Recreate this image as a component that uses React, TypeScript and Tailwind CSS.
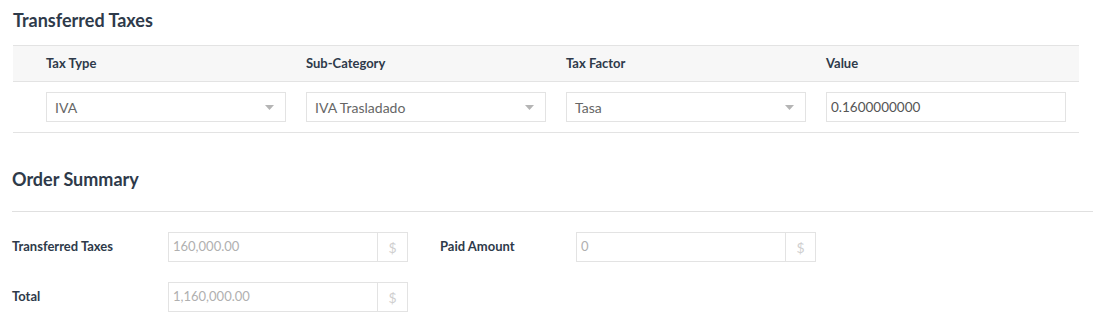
import { ReactNode } from 'react'

const taxColumns = ['Tax Type', 'Sub-Category', 'Tax Factor', 'Value']

function SelectBox({ value }: { value: string }) {
  return (
    <div className="flex items-center justify-between w-[240px] h-[30px] shrink-0 border border-[#e3e3e3] bg-white pl-[8px] pr-[11px] text-[14px] text-[#666]">
      <span>{value}</span>
      <svg width="9" height="5" viewBox="0 0 9 5" className="shrink-0">
        <path d="M0 0 L9 0 L4.5 5 Z" fill="#b5b5b5" />
      </svg>
    </div>
  )
}

function TextBox({ value }: { value: string }) {
  return (
    <div className="flex items-center w-[240px] h-[30px] shrink-0 border border-[#e3e3e3] bg-white px-[4px] text-[13.5px] text-[#555]">
      {value}
    </div>
  )
}

function MoneyBox({ value }: { value: string }) {
  return (
    <div className="flex w-[240px] h-[30px] shrink-0 border border-[#e3e3e3] bg-white text-[13px] text-[#b0b0b0]">
      <div className="flex-1 flex items-center px-[4px]">{value}</div>
      <div className="w-[30px] flex items-center justify-center border-l border-[#e3e3e3] text-[#cfcfcf] text-[14px]">
        $
      </div>
    </div>
  )
}

function Field({ label, width, children }: { label: string; width: string; children: ReactNode }) {
  return (
    <div className="flex items-center">
      <div className={`${width} shrink-0 text-[13px] font-bold text-[#2e3a4a]`}>{label}</div>
      {children}
    </div>
  )
}

export default function App() {
  return (
    <div
      className="w-[1093px] h-[320px] bg-white overflow-hidden"
      style={{ fontFamily: 'Lato, "Open Sans", sans-serif' }}
    >
      <div className="pl-[13px] w-[1079px]">
        <h2 className="pt-[8px] h-[32px] text-[18px] leading-[24px] font-bold text-[#2e3a4a]">
          Transferred Taxes
        </h2>
        <div className="mt-[13px]">
          <div className="h-[37px] flex items-center pl-[33px] bg-[#f7f7f7] border-y border-[#e3e3e3]">
            {taxColumns.map((col) => (
              <div key={col} className="w-[260px] shrink-0 text-[13px] font-bold text-[#2e3a4a]">
                {col}
              </div>
            ))}
          </div>
          <div className="flex gap-[20px] pl-[33px] py-[10px] border-b border-[#e3e3e3]">
            <SelectBox value="IVA" />
            <SelectBox value="IVA Trasladado" />
            <SelectBox value="Tasa" />
            <TextBox value="0.1600000000" />
          </div>
        </div>
      </div>

      <div className="pl-[12px]">
        <h2 className="mt-[34px] h-[24px] text-[18px] leading-[24px] font-bold text-[#2e3a4a]">
          Order Summary
        </h2>
        <div className="mt-[20px] border-t border-[#e0e0e0]" />
        <div className="pt-[20px] flex flex-col gap-[20px]">
          <div className="flex gap-[32px]">
            <Field label="Transferred Taxes" width="w-[156px]">
              <MoneyBox value="160,000.00" />
            </Field>
            <Field label="Paid Amount" width="w-[136px]">
              <MoneyBox value="0" />
            </Field>
          </div>
          <Field label="Total" width="w-[156px]">
            <MoneyBox value="1,160,000.00" />
          </Field>
        </div>
      </div>
    </div>
  )
}
